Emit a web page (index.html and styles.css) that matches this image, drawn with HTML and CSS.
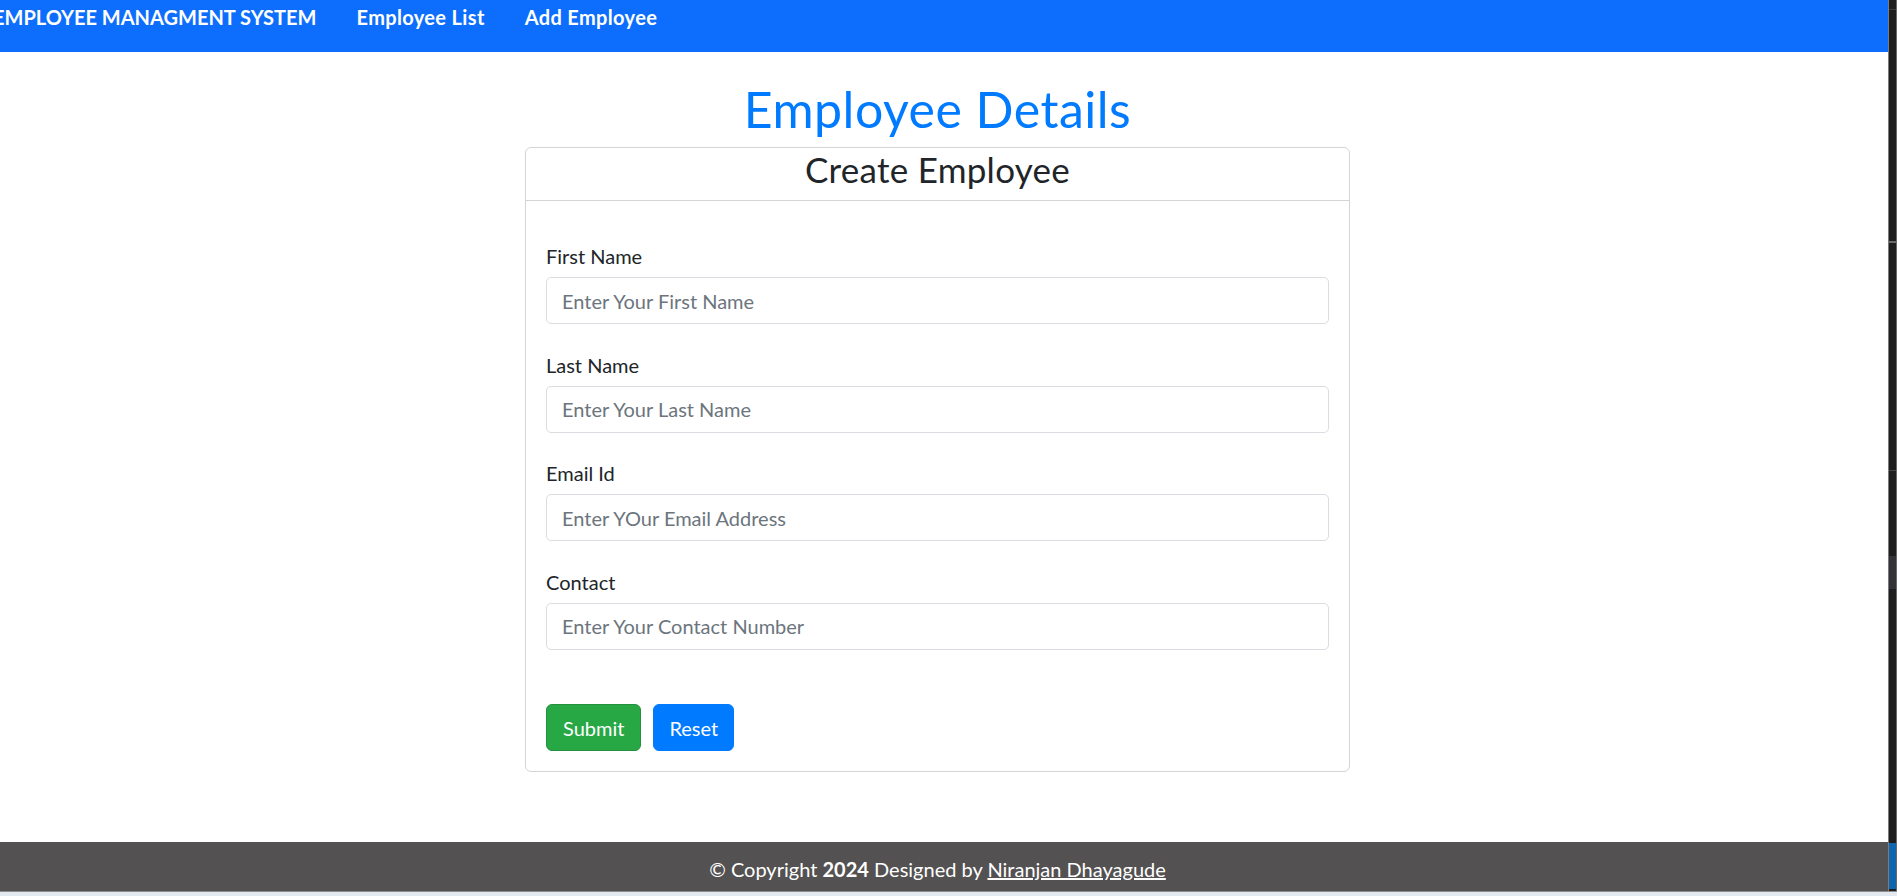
FILE: index.html
```html
<!DOCTYPE html>
<html lang="en">
<head>
<meta charset="utf-8">
<title>Employee Managment System</title>
<link rel="stylesheet" href="styles.css">
</head>
<body>
<div class="screen">
  <div class="page">
    <nav class="navbar">
      <span class="brand">EMPLOYEE MANAGMENT SYSTEM</span>
      <a class="nav-link" href="#">Employee List</a>
      <a class="nav-link" href="#">Add Employee</a>
    </nav>
    <main class="main">
      <h1 class="title">Employee Details</h1>
      <div class="card">
        <div class="card-header">
          <h3 class="card-title">Create Employee</h3>
        </div>
        <div class="card-body">
          <form class="form">
            <div class="field">
              <label class="label">First Name</label>
              <input class="input" type="text" placeholder="Enter Your First Name">
            </div>
            <div class="field">
              <label class="label">Last Name</label>
              <input class="input" type="text" placeholder="Enter Your Last Name">
            </div>
            <div class="field">
              <label class="label">Email Id</label>
              <input class="input" type="text" placeholder="Enter YOur Email Address">
            </div>
            <div class="field">
              <label class="label">Contact</label>
              <input class="input" type="text" placeholder="Enter Your Contact Number">
            </div>
            <div class="actions">
              <button class="btn btn-success" type="button">Submit</button>
              <button class="btn btn-primary" type="button">Reset</button>
            </div>
          </form>
        </div>
      </div>
    </main>
    <footer class="footer">
      © Copyright <b>2024</b> Designed by <a class="footer-link" href="#">Niranjan Dhayagude</a>
    </footer>
  </div>
  <div class="strip">
    <div class="seg seg-a"></div>
    <div class="seg seg-b"></div>
    <div class="seg seg-c"></div>
    <div class="seg seg-d"></div>
    <div class="seg seg-e"></div>
    <div class="seg seg-f"></div>
    <div class="seg seg-g"></div>
    <div class="seg seg-h"></div>
  </div>
</div>
<div class="taskbar"></div>
</body>
</html>
```
FILE: styles.css
```css
html, body {
  margin: 0;
  padding: 0;
}
body {
  width: 1897px;
  height: 896px;
  overflow: hidden;
  font-family: Lato, "Open Sans", sans-serif;
  font-size: 20px;
  line-height: 30px;
  color: #212529;
  background: #fff;
}
.screen {
  display: flex;
  height: 891px;
}
.page {
  width: 1888px;
  display: flex;
  flex-direction: column;
}
.navbar {
  height: 52px;
  box-sizing: border-box;
  background: #0d6efd;
  display: flex;
  align-items: flex-start;
  padding-top: 2px;
  white-space: nowrap;
  overflow: hidden;
}
.brand {
  margin-left: -7px;
  margin-right: 20px;
  font-weight: 700;
  font-size: 20px;
  line-height: 30px;
  color: #fff;
}
.nav-link {
  padding: 0 20px;
  font-weight: 700;
  font-size: 20px;
  line-height: 30px;
  letter-spacing: .35px;
  color: #fff;
  text-decoration: none;
}
.main {
  flex: 1;
  padding-right: 13px;
  display: flex;
  flex-direction: column;
  align-items: center;
}
.title {
  margin: 27px 0 8px;
  font-size: 50px;
  line-height: 60px;
  font-weight: 400;
  letter-spacing: .5px;
  color: #007bff;
}
.card {
  width: 825px;
  box-sizing: border-box;
  border: 1px solid #d4d4d4;
  border-radius: 6px;
  background: #fff;
}
.card-header {
  height: 53px;
  box-sizing: border-box;
  border-bottom: 1px solid #d4d4d4;
  text-align: center;
}
.card-title {
  margin: 0;
  font-size: 35px;
  line-height: 42px;
  font-weight: 400;
  letter-spacing: .27px;
  color: #212529;
}
.card-body {
  padding: 40px 20px 20px;
}
.form {
  display: flex;
  flex-direction: column;
}
.field {
  margin-bottom: 25.5px;
}
.label {
  display: block;
  margin-bottom: 6px;
  font-size: 20px;
  line-height: 30px;
  color: #212529;
}
.input {
  display: block;
  width: 100%;
  height: 47px;
  box-sizing: border-box;
  border: 1px solid #dadde1;
  border-radius: 5px;
  padding: 0 15px;
  font-family: Lato, "Open Sans", sans-serif;
  font-size: 20px;
  color: #495057;
  background: #fff;
  outline: none;
}
.input::placeholder {
  color: #6c757d;
}
.actions {
  display: flex;
  gap: 12px;
  margin-top: 29px;
}
.btn {
  height: 47px;
  padding: 0 16px;
  box-sizing: border-box;
  border: 1px solid transparent;
  border-radius: 6px;
  font-family: Lato, "Open Sans", sans-serif;
  font-size: 20px;
  line-height: 30px;
  color: #fff;
  cursor: pointer;
}
.btn-success {
  background: #28a745;
  border-color: #23913d;
}
.btn-primary {
  background: #007bff;
  border-color: #007bff;
  padding: 0 15px;
}
.footer {
  height: 49px;
  box-sizing: border-box;
  padding: 12px 13px 0 0;
  background: #535151;
  color: #fff;
  text-align: center;
  font-size: 20px;
  line-height: 30px;
}
.footer-link {
  color: #fff;
  text-decoration: underline;
}
.strip {
  width: 9px;
  box-sizing: border-box;
  border-left: 1px solid #7b7b7b;
  border-right: 1px solid #6a6a6a;
  background: #1e1e1e;
  display: flex;
  flex-direction: column;
}
.seg {
  box-sizing: border-box;
}
.seg-a { height: 10px; border-bottom: 1px solid #3c3c3c; }
.seg-b { height: 233px; border-bottom: 2px solid #6a6a6a; }
.seg-c { height: 228px; border-bottom: 1px solid #444; }
.seg-d { height: 85px; }
.seg-e { height: 33px; background: #333236; }
.seg-f { height: 254px; }
.seg-g { height: 46px; background: #0f66b0; }
.seg-h { height: 2px; }
.taskbar {
  height: 5px;
  box-sizing: border-box;
  border-top: 1px solid #8d8d8d;
  background: #e2e9f0;
}
```
